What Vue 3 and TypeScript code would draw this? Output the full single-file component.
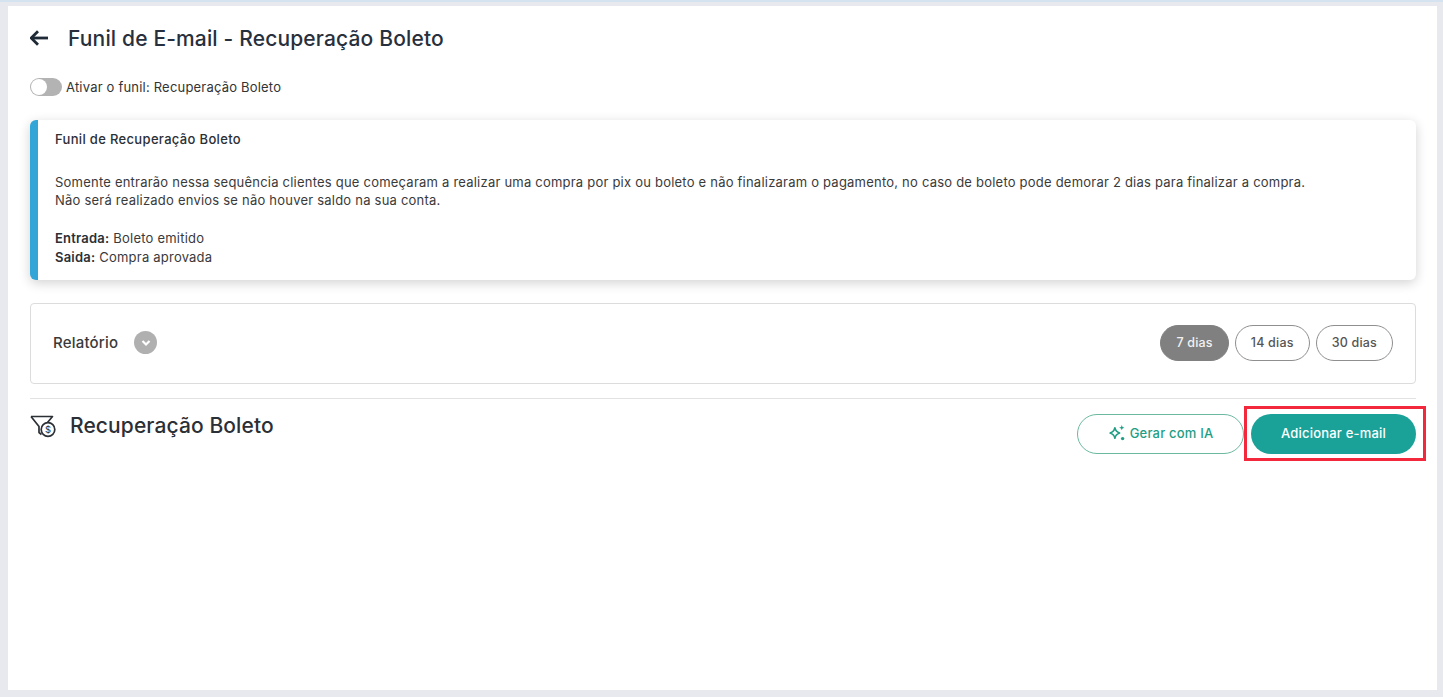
<script setup lang="ts">
const periods: { label: string; active: boolean }[] = [
  { label: '7 dias', active: true },
  { label: '14 dias', active: false },
  { label: '30 dias', active: false },
]
</script>

<template>
  <div class="page">
    <main class="panel">
      <header class="head">
        <svg class="back" width="18" height="16" viewBox="0 0 18 16" fill="none" stroke="#1f2a37" stroke-width="2.8">
          <path d="M18 8H1.500" />
          <path d="M8 1.200 1.200 8 8 14.800" />
        </svg>
        <h1>Funil de E-mail - Recuperação Boleto</h1>
      </header>

      <div class="switch-row">
        <span class="switch"><span class="knob"></span></span>
        <span>Ativar o funil: Recuperação Boleto</span>
      </div>

      <section class="info">
        <p class="info-title">Funil de Recuperação Boleto</p>
        <p class="info-body">
          Somente entrarão nessa sequência clientes que começaram a realizar uma compra por pix ou boleto e não finalizaram o pagamento, no caso de boleto pode demorar 2 dias para finalizar a compra.<br />
          Não será realizado envios se não houver saldo na sua conta.
        </p>
        <p class="info-body"><b>Entrada:</b> Boleto emitido<br /><b>Saida:</b> Compra aprovada</p>
      </section>

      <section class="report">
        <div class="report-left">
          <span class="report-title">Relatório</span>
          <span class="chev">
            <svg width="12" height="12" viewBox="0 0 12 12" fill="none" stroke="#fff" stroke-width="2.2"><path d="M2.500 4 6 7.500 9.500 4" /></svg>
          </span>
        </div>
        <div class="pills">
          <span v-for="p in periods" :key="p.label" class="pill" :class="{ active: p.active }">{{ p.label }}</span>
        </div>
      </section>

      <div class="funnel-row">
        <div class="funnel-title">
          <svg width="27" height="24" viewBox="0 0 27 24" fill="none" stroke="#2b2f36" stroke-width="1.700">
            <path d="M1 2.500H22.500L17.500 8.500" stroke-linejoin="round" />
            <path d="M1 2.500 9 12.500V18.500L11.500 20.500" stroke-linejoin="round" />
            <circle cx="18" cy="15.500" r="6.800" />
            <text x="18" y="19" font-size="9.500" text-anchor="middle" fill="#2b2f36" stroke="none" font-family="Inter, sans-serif">$</text>
          </svg>
          <h2>Recuperação Boleto</h2>
        </div>
        <div class="actions">
          <button class="btn ghost">
            <svg width="18" height="18" viewBox="0 0 17 17" fill="#1f9e84">
              <path fill="none" stroke="#1f9e84" stroke-width="1.500" stroke-linejoin="round" d="M6.500 3.500c.5 3 1.500 4 4.500 5-3 1-4 2-4.500 5-.5-3-1.500-4-4.500-5 3-1 4-2 4.500-5z" />
              <path d="M13 1l.7 1.800L15.500 3.500l-1.800.7L13 6l-.7-1.800L10.500 3.500l1.800-.7z" />
              <circle cx="13.800" cy="13.800" r="1.600" />
            </svg>
            Gerar com IA
          </button>
          <div class="highlight-wrap">
            <button class="btn solid">Adicionar e-mail</button>
            <span class="highlight"></span>
          </div>
        </div>
      </div>
    </main>
  </div>
</template>

<style>
html, body { margin: 0; background: #e8e9ee; }
</style>

<style scoped>
* { box-sizing: border-box; }
.page {
  height: 697px;
  background: #e8e9ee;
  border-top: 2px solid #d5e3f1;
  padding: 4px 6px 7px 8px;
  font-family: Inter, "Open Sans", sans-serif;
  color: #2b2f36;
  overflow: hidden;
}
.panel {
  height: 100%;
  background: #fff;
  padding: 0 21px 0 22px;
}
.head {
  display: flex;
  align-items: center;
  gap: 20px;
  height: 64px;
}
.back { flex: none; }
h1 {
  margin: 0;
  font-size: 21px;
  font-weight: 500;
  color: #27303c;
  letter-spacing: 0.15px;
}
.switch-row {
  display: flex;
  align-items: center;
  gap: 4px;
  height: 18px;
  margin-top: 8px;
  font-size: 13px;
  color: #333;
  letter-spacing: 0.2px;
}
.switch {
  display: block;
  width: 32px;
  height: 18px;
  border-radius: 9px;
  background: #b3b3b3;
  padding: 1px;
}
.knob {
  display: block;
  width: 16px;
  height: 16px;
  border-radius: 50%;
  background: #fff;
}
.info {
  margin-top: 24px;
  height: 160px;
  border-left: 8px solid #33a5d6;
  border-radius: 6px;
  padding: 10px 17px;
  box-shadow: 0 3px 12px rgba(0, 0, 0, 0.18);
  font-size: 13px;
  line-height: 18.700px;
  letter-spacing: 0.22px;
  color: #3a3a3a;
}
.info p { margin: 0; }
.info-title { color: #2b2f36; font-weight: 500; letter-spacing: 0.33px; }
.info-body { margin-top: 24px !important; }
.info-body b { font-weight: 600; color: #2b2f36; }
.info-body:last-child { margin-top: 19px !important; }
.report {
  margin-top: 23px;
  height: 81px;
  border: 1px solid #dcdcdc;
  border-radius: 4px;
  padding: 0 22px 2px;
  display: flex;
  align-items: center;
  justify-content: space-between;
}
.report-left { display: flex; align-items: center; gap: 16px; }
.report-title { font-size: 15px; font-weight: 500; color: #3a3a3a; letter-spacing: 0.2px; }
.chev {
  width: 23px;
  height: 23px;
  border-radius: 50%;
  background: #b0b0b0;
  display: flex;
  align-items: center;
  justify-content: center;
}
.pills { display: flex; gap: 6px; }
.pill {
  height: 36px;
  padding: 0 15px;
  border: 1px solid #8f8f8f;
  border-radius: 18px;
  display: flex;
  align-items: center;
  font-size: 12.500px;
  font-weight: 500;
  color: #555;
  letter-spacing: 0.2px;
}
.pill.active {
  background: #808080;
  border-color: #808080;
  color: #f2f2f2;
}
.funnel-row {
  margin-top: 14px;
  border-top: 1px solid #e2e2e2;
  padding-top: 15px;
  display: flex;
  justify-content: space-between;
  align-items: flex-start;
}
.funnel-title { display: flex; align-items: center; gap: 13px; margin-top: -1px; }
h2 {
  margin: 0;
  font-size: 21px;
  font-weight: 500;
  color: #2b2f36;
  letter-spacing: 0.1px;
}
.actions { display: flex; gap: 7px; }
.btn {
  width: 167px;
  height: 40px;
  border-radius: 20px;
  padding: 0 0 2px;
  font-family: inherit;
  font-size: 13px;
  font-weight: 500;
  display: flex;
  align-items: center;
  justify-content: center;
  gap: 4px;
  letter-spacing: 0.2px;
}
.ghost {
  background: #fff;
  border: 1px solid #6cb9a2;
  color: #1f9e84;
}
.solid {
  background: #1aa299;
  border: 0;
  color: #fff;
  width: 165px;
}
.highlight-wrap { position: relative; }
.highlight {
  position: absolute;
  left: -7px;
  top: -8px;
  width: 182px;
  height: 55px;
  border: 3px solid #f4283c;
}
</style>
